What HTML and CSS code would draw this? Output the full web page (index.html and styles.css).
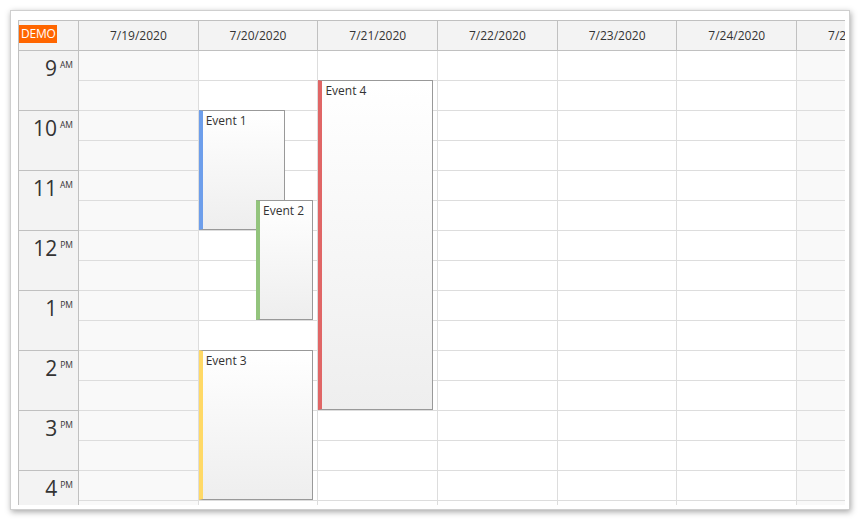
FILE: index.html
```html
<!DOCTYPE html>
<html>
<head>
<meta charset="utf-8">
<link rel="stylesheet" href="styles.css">
</head>
<body>
<div class="frame">
  <div class="calendar">
    <div class="header">
      <div class="corner"><span class="demo">DEMO</span></div>
      <div class="colhead">7/19/2020</div>
      <div class="colhead">7/20/2020</div>
      <div class="colhead">7/21/2020</div>
      <div class="colhead">7/22/2020</div>
      <div class="colhead">7/23/2020</div>
      <div class="colhead">7/24/2020</div>
      <div class="colhead">7/25/2020</div>
    </div>
    <div class="body">
      <div class="times">
        <div class="hour"><span class="num">9</span><span class="ampm">AM</span></div>
        <div class="hour"><span class="num">10</span><span class="ampm">AM</span></div>
        <div class="hour"><span class="num">11</span><span class="ampm">AM</span></div>
        <div class="hour"><span class="num">12</span><span class="ampm">PM</span></div>
        <div class="hour"><span class="num">1</span><span class="ampm">PM</span></div>
        <div class="hour"><span class="num">2</span><span class="ampm">PM</span></div>
        <div class="hour"><span class="num">3</span><span class="ampm">PM</span></div>
        <div class="hour"><span class="num">4</span><span class="ampm">PM</span></div>
      </div>
      <div class="day weekend">
        <div class="slot"></div><div class="slot"></div><div class="slot"></div><div class="slot"></div>
        <div class="slot"></div><div class="slot"></div><div class="slot"></div><div class="slot"></div>
        <div class="slot"></div><div class="slot"></div><div class="slot"></div><div class="slot"></div>
        <div class="slot"></div><div class="slot"></div><div class="slot"></div><div class="slot"></div>
      </div>
      <div class="day">
        <div class="slot"></div><div class="slot"></div><div class="slot"></div><div class="slot"></div>
        <div class="slot"></div><div class="slot"></div><div class="slot"></div><div class="slot"></div>
        <div class="slot"></div><div class="slot"></div><div class="slot"></div><div class="slot"></div>
        <div class="slot"></div><div class="slot"></div><div class="slot"></div><div class="slot"></div>
        <div class="events">
          <div class="event blue" style="top:59px;height:120px;left:0;width:75%">Event 1</div>
          <div class="event green" style="top:149px;height:120px;left:50%;width:50%">Event 2</div>
          <div class="event yellow" style="top:299px;height:150px;left:0;width:100%">Event 3</div>
        </div>
      </div>
      <div class="day">
        <div class="slot"></div><div class="slot"></div><div class="slot"></div><div class="slot"></div>
        <div class="slot"></div><div class="slot"></div><div class="slot"></div><div class="slot"></div>
        <div class="slot"></div><div class="slot"></div><div class="slot"></div><div class="slot"></div>
        <div class="slot"></div><div class="slot"></div><div class="slot"></div><div class="slot"></div>
        <div class="events">
          <div class="event red" style="top:29px;height:330px;left:0;width:100%">Event 4</div>
        </div>
      </div>
      <div class="day">
        <div class="slot"></div><div class="slot"></div><div class="slot"></div><div class="slot"></div>
        <div class="slot"></div><div class="slot"></div><div class="slot"></div><div class="slot"></div>
        <div class="slot"></div><div class="slot"></div><div class="slot"></div><div class="slot"></div>
        <div class="slot"></div><div class="slot"></div><div class="slot"></div><div class="slot"></div>
      </div>
      <div class="day">
        <div class="slot"></div><div class="slot"></div><div class="slot"></div><div class="slot"></div>
        <div class="slot"></div><div class="slot"></div><div class="slot"></div><div class="slot"></div>
        <div class="slot"></div><div class="slot"></div><div class="slot"></div><div class="slot"></div>
        <div class="slot"></div><div class="slot"></div><div class="slot"></div><div class="slot"></div>
      </div>
      <div class="day">
        <div class="slot"></div><div class="slot"></div><div class="slot"></div><div class="slot"></div>
        <div class="slot"></div><div class="slot"></div><div class="slot"></div><div class="slot"></div>
        <div class="slot"></div><div class="slot"></div><div class="slot"></div><div class="slot"></div>
        <div class="slot"></div><div class="slot"></div><div class="slot"></div><div class="slot"></div>
      </div>
      <div class="day weekend">
        <div class="slot"></div><div class="slot"></div><div class="slot"></div><div class="slot"></div>
        <div class="slot"></div><div class="slot"></div><div class="slot"></div><div class="slot"></div>
        <div class="slot"></div><div class="slot"></div><div class="slot"></div><div class="slot"></div>
        <div class="slot"></div><div class="slot"></div><div class="slot"></div><div class="slot"></div>
      </div>
    </div>
  </div>
</div>
</body>
</html>
```

FILE: styles.css
```css
* { box-sizing: border-box; }

body {
  margin: 0;
  background: #ffffff;
  font-family: "Open Sans", "DejaVu Sans", sans-serif;
  color: #333333;
}

.frame {
  margin: 10px;
  width: 840px;
  height: 500px;
  border: 1px solid #cfcfcf;
  background: #ffffff;
  padding: 9px 0 0 7px;
  box-shadow: 1px 2px 6px rgba(0, 0, 0, 0.35);
}

.calendar {
  width: 827px;
  height: 485px;
  overflow: hidden;
  border-top: 1px solid #c0c0c0;
  border-left: 1px solid #c0c0c0;
}

.header {
  display: flex;
  height: 30px;
}

.corner {
  flex: 0 0 60px;
  background: #f3f3f3;
  border-right: 1px solid #c0c0c0;
  border-bottom: 1px solid #c0c0c0;
}

.demo {
  display: inline-block;
  background: #ff6600;
  color: #ffffff;
  font-size: 12px;
  line-height: 18px;
  height: 18px;
  padding: 0 1px 0 2px;
  letter-spacing: -0.2px;
}

.colhead {
  flex: 0 0 119.7px;
  background: #f3f3f3;
  border-right: 1px solid #c0c0c0;
  border-bottom: 1px solid #c0c0c0;
  font-size: 12px;
  display: flex;
  align-items: center;
  justify-content: center;
  white-space: nowrap;
}

.body {
  display: flex;
  align-items: flex-start;
}

.times {
  flex: 0 0 60px;
  background: #f3f3f3;
}

.hour {
  height: 60px;
  border-right: 1px solid #c0c0c0;
  border-bottom: 1px solid #c0c0c0;
  text-align: right;
  padding: 3px 5px 0 0;
  line-height: 28px;
  white-space: nowrap;
}

.num {
  font-size: 21px;
}

.ampm {
  font-size: 8.5px;
  line-height: 1;
  vertical-align: 8px;
  padding-left: 3px;
}

.day {
  flex: 0 0 119.7px;
  position: relative;
  background: #ffffff;
  border-right: 1px solid #dddddd;
}

.day.weekend {
  background: #f9f9f9;
}

.slot {
  height: 30px;
  border-bottom: 1px solid #dddddd;
}

.events {
  position: absolute;
  top: 0;
  bottom: 0;
  left: 0;
  right: 4px;
}

.event {
  position: absolute;
  border: 1px solid #999999;
  border-left: 4px solid #999999;
  background: linear-gradient(to bottom, #ffffff 0%, #eeeeee 100%);
  font-size: 12px;
  line-height: 16px;
  padding: 2px 0 0 3px;
  color: #333333;
  white-space: nowrap;
  overflow: hidden;
}

.event.blue { border-left-color: #6d9eeb; }
.event.green { border-left-color: #93c47d; }
.event.yellow { border-left-color: #ffd966; }
.event.red { border-left-color: #e06666; }
```
